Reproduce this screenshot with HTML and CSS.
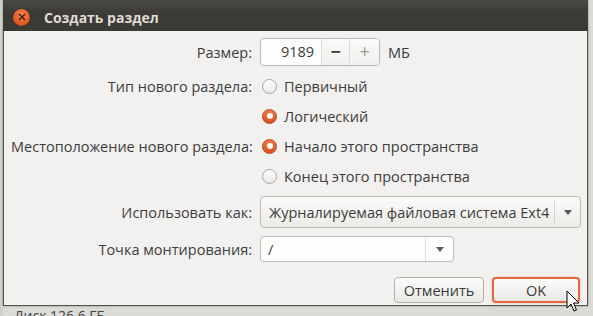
FILE: index.html
```html
<!DOCTYPE html>
<html lang="ru">
  <head>
    <meta charset="UTF-8" />
    <meta name="viewport" content="width=device-width, initial-scale=1.0" />
    <title>Создать раздел</title>
    <link rel="stylesheet" href="styles.css">
  </head>
  <body>
    <div class="desktop">
      <div class="window">
        <div class="titlebar">
          <span class="close">
            <svg width="8" height="8" viewBox="0 0 8 8"><path d="M1 1 L7 7 M7 1 L1 7" stroke="#3a1a0a" stroke-width="1.4" /></svg>
          </span>
          <span class="title">Создать раздел</span>
        </div>
        <div class="content">
          <div class="row row-size">
            <span class="label">Размер:</span>
            <div class="spin">
              <span class="spin-value">9189</span>
              <span class="spin-btn">&minus;</span>
              <span class="spin-btn spin-plus">+</span>
            </div>
            <span class="unit">МБ</span>
          </div>
          <div class="row row-radio first-radio">
            <span class="label">Тип нового раздела:</span>
            <span class="radio"></span>
            <span class="option">Первичный</span>
          </div>
          <div class="row row-radio">
            <span class="label"></span>
            <span class="radio checked"></span>
            <span class="option">Логический</span>
          </div>
          <div class="row row-radio">
            <span class="label">Местоположение нового раздела:</span>
            <span class="radio checked"></span>
            <span class="option">Начало этого пространства</span>
          </div>
          <div class="row row-radio">
            <span class="label"></span>
            <span class="radio"></span>
            <span class="option">Конец этого пространства</span>
          </div>
          <div class="row row-combo">
            <span class="label">Использовать как:</span>
            <div class="combo">
              <span class="combo-text">Журналируемая файловая система Ext4</span>
              <span class="combo-arrow"><span class="triangle"></span></span>
            </div>
          </div>
          <div class="row row-mount">
            <span class="label">Точка монтирования:</span>
            <div class="entry-combo">
              <span class="entry-text">/</span>
              <span class="combo-arrow"><span class="triangle"></span></span>
            </div>
          </div>
          <div class="buttons">
            <button class="btn">Отменить</button>
            <button class="btn btn-default">OK</button>
          </div>
        </div>
      </div>
      <div class="under">Диск 126,6 ГБ</div>
      <svg class="cursor" width="14" height="22" viewBox="0 0 14 22">
        <path d="M1 1 L1 18 L5 14 L8 21 L10.5 20 L7.5 13 L13 13 Z" fill="#ffffff" stroke="#000000" stroke-width="1" stroke-linejoin="round" />
      </svg>
    </div>
  </body>
</html>
```

FILE: styles.css
```css
html, body {
  margin: 0;
  padding: 0;
}
body {
  width: 593px;
  height: 316px;
  overflow: hidden;
  background-color: #dcdbd7;
  font-family: 'Open Sans', 'Noto Sans', sans-serif;
  font-size: 14.5px;
  color: #3c3c3c;
}
.desktop {
  position: relative;
  height: 316px;
  background: linear-gradient(to right, #cfd3c8 0, #cfd3c8 3px, #dcdbd7 3px);
}
.window {
  margin-left: 3px;
  width: 585px;
  height: 306px;
  box-sizing: border-box;
  border: 1px solid #55534e;
  border-top: none;
  background-color: #f2f1f0;
  box-shadow: 0 0 2px rgba(0, 0, 0, 0.4);
}
.titlebar {
  height: 31px;
  margin: 0 -1px;
  background: linear-gradient(#4a4944, #3c3b37 40%, #3a3935);
  display: flex;
  align-items: center;
  padding-left: 10px;
  padding-top: 3px;
  box-sizing: border-box;
}
.close {
  width: 17px;
  height: 17px;
  border-radius: 50%;
  background: radial-gradient(circle at 50% 35%, #f68a5c, #e55a24 60%, #c9461a);
  box-shadow: 0 0 1px rgba(0, 0, 0, 0.8);
  display: flex;
  align-items: center;
  justify-content: center;
}
.title {
  margin-left: 14px;
  font-weight: bold;
  font-size: 14px;
  color: #dfdbd2;
}
.content {
  padding: 7px 6px 0 7px;
}
.row {
  display: flex;
  align-items: center;
}
.label {
  width: 241px;
  flex: none;
  text-align: right;
  white-space: nowrap;
  margin-right: 8px;
}
.row-size {
  height: 28px;
}
.spin {
  display: flex;
  width: 120px;
  height: 28px;
  box-sizing: border-box;
  border: 1px solid #b9b7b3;
  border-radius: 4px;
  background-color: #fdfdfd;
  overflow: hidden;
}
.spin-value {
  width: 62px;
  box-sizing: border-box;
  padding-right: 7px;
  text-align: right;
  line-height: 26px;
}
.spin-btn {
  width: 28px;
  border-left: 1px solid #dddbd7;
  text-align: center;
  line-height: 25px;
  font-size: 18px;
  font-weight: bold;
  color: #3c3c3c;
  background: linear-gradient(#fafafa, #f0efed);
}
.spin-plus {
  width: 30px;
  font-weight: normal;
  color: #9a9893;
}
.unit {
  margin-left: 8px;
}
.row-radio {
  height: 30px;
}
.first-radio {
  margin-top: 5px;
}
.radio {
  width: 15px;
  height: 15px;
  margin-left: 2px;
  margin-right: 7px;
  box-sizing: border-box;
  border-radius: 50%;
  border: 1px solid #a6a49f;
  background: linear-gradient(#ffffff, #ebeae8);
  display: flex;
  align-items: center;
  justify-content: center;
}
.radio.checked {
  border-color: #b8461d;
  background: linear-gradient(#f07a4a, #d9501f);
}
.radio.checked::after {
  content: '';
  width: 6px;
  height: 6px;
  border-radius: 50%;
  background-color: #ffffff;
}
.row-combo {
  margin-top: 5px;
  height: 32px;
}
.combo {
  display: flex;
  align-items: center;
  width: 321px;
  height: 32px;
  box-sizing: border-box;
  border: 1px solid #bcbab5;
  border-radius: 4px;
  background: linear-gradient(#fbfbfa, #ecebe8);
}
.combo-text {
  flex: 1;
  padding-left: 8px;
}
.combo-arrow {
  width: 25px;
  height: 22px;
  border-left: 1px solid #d3d1cd;
  display: flex;
  align-items: center;
  justify-content: center;
}
.triangle {
  width: 0;
  height: 0;
  border-left: 4px solid transparent;
  border-right: 4px solid transparent;
  border-top: 5px solid #5a5955;
}
.row-mount {
  margin-top: 8px;
  height: 26px;
}
.entry-combo {
  display: flex;
  align-items: center;
  width: 194px;
  height: 26px;
  box-sizing: border-box;
  border: 1px solid #bcbab5;
  border-radius: 4px;
  background-color: #fdfdfd;
}
.entry-text {
  flex: 1;
  padding-left: 7px;
}
.entry-combo .combo-arrow {
  width: 27px;
  height: 24px;
  border-left-color: #e3e1dd;
}
.buttons {
  display: flex;
  justify-content: flex-end;
  gap: 8px;
  margin-top: 15px;
  padding-right: 1px;
}
.btn {
  width: 90px;
  height: 26px;
  font-family: inherit;
  font-size: 14.5px;
  color: #3c3c3c;
  border: 1px solid #b3b1ac;
  border-radius: 4px;
  background: linear-gradient(#fcfcfb, #e9e8e5);
  padding: 0;
}
.btn-default {
  width: 88px;
  border: 2px solid #e4693c;
  box-shadow: 0 0 2px rgba(228, 105, 60, 0.6);
}
.under {
  padding: 2px 0 0 14px;
  font-size: 14px;
  line-height: 16px;
  color: #444444;
}
.cursor {
  position: absolute;
  left: 566px;
  top: 290px;
}
```
